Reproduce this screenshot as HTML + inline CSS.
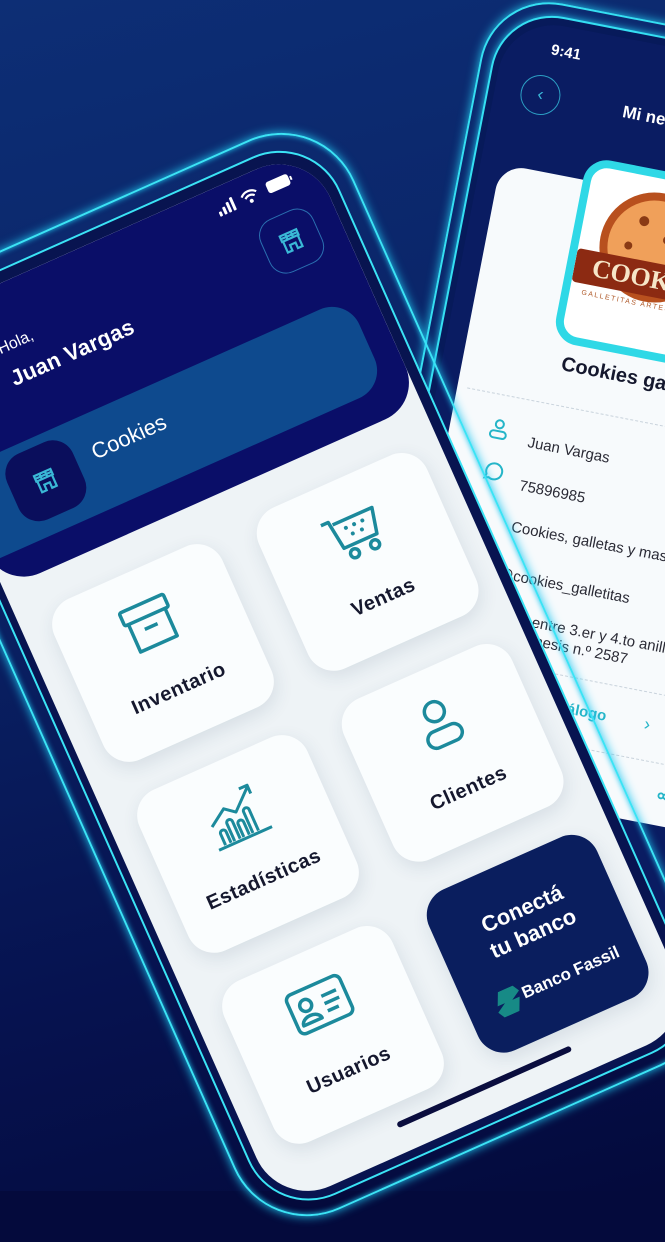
<!DOCTYPE html>
<html><head><meta charset="utf-8">
<style>
*{margin:0;padding:0;box-sizing:border-box}
html{background:#040a3c}
body{width:665px;height:1191px;overflow:hidden;position:relative;font-family:"Liberation Sans","DejaVu Sans",sans-serif;background:linear-gradient(165deg,#0d2e75 0%,#0a2366 40%,#06124f 75%,#040a3c 100%)}
.abs{position:absolute}
.rot{position:absolute;width:0;height:0}
.tile{position:absolute;width:184px;height:176px;border-radius:28px;background:#fafdfe;box-shadow:0 6px 18px rgba(40,70,110,.12)}
.tile .ic{position:absolute;left:50%;top:28px;transform:translateX(-50%)}
.tile .lb{position:absolute;left:0;right:0;top:116px;text-align:center;font-weight:bold;font-size:20px;color:#15182e;letter-spacing:.5px}
.rt{position:absolute;white-space:nowrap;color:#2a2a35;font-size:15px}
</style></head><body>

<!-- RIGHT PHONE -->
<div class="rot" style="left:528px;top:442px;transform:rotate(11deg)">
  <div class="abs" style="left:-120px;top:-437px;width:420px;height:1000px;border:2px solid #35dff2;border-radius:70px;box-shadow:0 0 10px #23c8ee"></div>
  <div class="abs" style="left:-108px;top:-424px;width:400px;height:980px;border:2px solid #35dff2;border-radius:62px;background:#071a5a;box-shadow:0 0 8px #23c8ee"></div>
  <div class="abs" style="left:-100px;top:-415px;width:380px;height:960px;border-radius:56px;background:#0a1c62"></div>
  <div class="abs" style="left:-52px;top:-398px;color:#fff;font-weight:bold;font-size:15px">9:41</div>
  <div class="abs" style="left:-74px;top:-363px;width:40px;height:40px;border:1.5px solid #2c9fc4;border-radius:50%;color:#3bb8d8;font-size:18px;text-align:center;line-height:36px">&#8249;</div>
  <div class="abs" style="left:30px;top:-352px;color:#fff;font-weight:bold;font-size:17px;white-space:nowrap">Mi negocio</div>
  <div class="abs" style="left:-80px;top:-268px;width:330px;height:620px;border-radius:26px;background:#f7fafc"></div>
  <div class="abs" style="left:4px;top:-292px;width:185px;height:188px;border:8px solid #2fd8e6;border-radius:24px;background:#fff;overflow:hidden">
    <div class="abs" style="left:20px;top:14px;width:110px;height:110px;border-radius:50%;background:#b8501e"></div>
    <div class="abs" style="left:28px;top:22px;width:94px;height:94px;border-radius:50%;background:#f0a05a"></div>
    <div class="abs" style="left:55px;top:40px;width:10px;height:10px;border-radius:50%;background:#8a3a14"></div>
    <div class="abs" style="left:82px;top:55px;width:9px;height:9px;border-radius:50%;background:#8a3a14"></div>
    <div class="abs" style="left:45px;top:68px;width:8px;height:8px;border-radius:50%;background:#8a3a14"></div>
    <div class="abs" style="left:0px;top:84px;width:180px;height:34px;background:#8c2a12;border-radius:4px;color:#f6e6c8;font-family:'Liberation Serif',serif;font-weight:bold;font-size:26px;line-height:34px;padding-left:18px">COOKIES</div>
    <div class="abs" style="left:12px;top:124px;color:#b05a2a;font-size:7px;letter-spacing:1.5px;white-space:nowrap">GALLETITAS ARTESANALES</div>
  </div>
  <div class="abs" style="left:18px;top:-94px;font-weight:bold;font-size:20px;color:#15182e;white-space:nowrap">Cookies galletitas</div>
  <div class="abs" style="left:-70px;top:-42px;width:310px;border-top:1.5px dashed #c9d3dc"></div>
  <svg class="abs" style="left:-42px;top:-18px" width="22" height="22" viewBox="0 0 22 22" fill="none" stroke="#25b5c8" stroke-width="2"><circle cx="11" cy="6" r="4"/><rect x="3" y="13" width="16" height="7" rx="3.5"/></svg>
  <div class="rt" style="left:0;top:-8px">Juan Vargas</div>
  <svg class="abs" style="left:-40px;top:24px" width="22" height="22" viewBox="0 0 22 22" fill="none" stroke="#25b5c8" stroke-width="2"><path d="M4 19l1.3-4A8 8 0 1 1 8 18z"/></svg>
  <div class="rt" style="left:0;top:36px">75896985</div>
  <div class="rt" style="left:0;top:78px">Cookies, galletas y masitas</div>
  <div class="rt" style="left:-4px;top:126px">@cookies_galletitas</div>
  <div class="rt" style="left:0;top:168px">Zona entre 3.er y 4.to anillo</div>
  <div class="rt" style="left:0;top:186px">Av. Génesis n.º 2587</div>
  <div class="abs" style="left:-70px;top:222px;width:310px;border-top:1.5px dashed #c9d3dc"></div>
  <div class="rt" style="left:40px;top:246px;color:#25b5c8;font-weight:bold">Ver catálogo</div>
  <div class="rt" style="left:168px;top:244px;color:#25b5c8;font-size:18px">&#8250;</div>
  <div class="abs" style="left:-70px;top:290px;width:310px;border-top:1.5px dashed #c9d3dc"></div>
  <svg class="abs" style="left:194px;top:312px" width="20" height="20" viewBox="0 0 20 20" fill="none" stroke="#25b5c8" stroke-width="1.8"><circle cx="15" cy="4" r="2.5"/><circle cx="4" cy="10" r="2.5"/><circle cx="15" cy="16" r="2.5"/><path d="M6.2 8.8l6.6-3.6M6.2 11.2l6.6 3.6"/></svg>
</div>

<!-- LEFT PHONE -->
<div class="rot" style="left:163px;top:653px;transform:rotate(-24deg)">
  <div class="abs" style="left:-145px;top:-434px;width:512px;height:1014px;border:2.5px solid #3be3f5;border-radius:80px;box-shadow:0 0 10px #1fc6f0,inset 0 0 6px #1fc6f0"></div>
  <div class="abs" style="left:-129px;top:-417px;width:479px;height:982px;border:2px solid #3be3f5;border-radius:66px;background:#081450"></div>
  <div class="abs" style="left:-120px;top:-404px;width:458px;height:959px;border-radius:56px;background:#eef3f6;overflow:hidden">
    <div class="abs" style="left:0;top:0;width:458px;height:281px;background:#0a0e68;border-radius:0 0 40px 40px"></div>
    <svg class="abs" style="left:350px;top:12px" width="90" height="20" viewBox="0 0 90 20">
      <rect x="0" y="12" width="3" height="5" rx="1" fill="#fff"/><rect x="5" y="9" width="3" height="8" rx="1" fill="#fff"/><rect x="10" y="6" width="3" height="11" rx="1" fill="#fff"/><rect x="15" y="3" width="3" height="14" rx="1" fill="#fff"/>
      <path d="M27 8a11 11 0 0 1 16 0M30 11a7 7 0 0 1 10 0" stroke="#fff" stroke-width="2.2" fill="none"/><circle cx="35" cy="15" r="2" fill="#fff"/>
      <rect x="54" y="4" width="24" height="12" rx="3" fill="#fff"/><rect x="79" y="8" width="2" height="4" fill="#fff"/>
    </svg>
    <div class="abs" style="left:376px;top:51px;width:58px;height:58px;border:1.5px solid #2a6fb0;border-radius:18px"></div>
    <svg class="abs" style="left:391px;top:66px" width="28" height="28" viewBox="0 0 28 28" fill="none" stroke="#3ab8d6" stroke-width="2.2"><path d="M5 11V5h18v6z M5 8h18 M11 5v6 M17 5v6 M6 11v12h5v-6h6v6h5V11"/></svg>
    <div class="abs" style="left:93px;top:52px;color:#fff;font-size:16px">Hola,</div>
    <div class="abs" style="left:93px;top:80px;color:#fff;font-size:22px;font-weight:bold;letter-spacing:.3px">Juan Vargas</div>
    <div class="abs" style="left:-20px;top:154px;width:453px;height:97px;background:#0e4a8e;border-radius:30px"></div>
    <div class="abs" style="left:47px;top:163px;width:72px;height:72px;background:#0a0e5c;border-radius:22px"></div>
    <svg class="abs" style="left:69px;top:185px" width="28" height="28" viewBox="0 0 28 28" fill="none" stroke="#3ab8d6" stroke-width="2.2"><path d="M5 11V5h18v6z M5 8h18 M11 5v6 M17 5v6 M6 11v12h5v-6h6v6h5V11"/></svg>
    <div class="abs" style="left:137px;top:180px;color:#fff;font-size:22px">Cookies</div>
    <div class="tile" style="left:28px;top:316px">
      <svg class="ic" width="60" height="56" viewBox="0 0 60 56" fill="none" stroke="#1c8a9c" stroke-width="3.5" stroke-linejoin="round"><rect x="6" y="6" width="48" height="14" rx="2"/><path d="M10 20v30h40V20"/><path d="M23 31h14"/></svg>
      <div class="lb">Inventario</div></div>
    <div class="tile" style="left:252px;top:316px">
      <svg class="ic" width="64" height="56" viewBox="0 0 64 56" fill="none" stroke="#1c8a9c" stroke-width="3.5" stroke-linejoin="round"><path d="M4 8h8l4 30h36l6-26H15"/><circle cx="24" cy="47" r="4.5"/><circle cx="46" cy="47" r="4.5"/><g fill="#1c8a9c" stroke="none"><circle cx="26" cy="20" r="2"/><circle cx="35" cy="20" r="2"/><circle cx="44" cy="20" r="2"/><circle cx="30" cy="28" r="2"/><circle cx="40" cy="28" r="2"/></g></svg>
      <div class="lb">Ventas</div></div>
    <div class="tile" style="left:28px;top:525px">
      <svg class="ic" width="64" height="58" viewBox="0 0 64 58" fill="none" stroke="#1c8a9c" stroke-width="3" stroke-linejoin="round"><path d="M6 30l18-12 10 8 20-18M46 6h9v9"/><path d="M3 54h58"/><path d="M11 52V40a3 3 0 0 1 6 0v12M21 52V33a3 3 0 0 1 6 0v19M31 52V38a3 3 0 0 1 6 0v14M41 52V29a3 3 0 0 1 6 0v23"/></svg>
      <div class="lb">Estadísticas</div></div>
    <div class="tile" style="left:252px;top:525px">
      <svg class="ic" width="56" height="56" viewBox="0 0 56 56" fill="none" stroke="#1c8a9c" stroke-width="3.5"><circle cx="28" cy="15" r="10"/><rect x="10" y="33" width="36" height="17" rx="8.5"/></svg>
      <div class="lb">Clientes</div></div>
    <div class="tile" style="left:28px;top:734px">
      <svg class="ic" width="66" height="54" viewBox="0 0 66 54" fill="none" stroke="#1c8a9c" stroke-width="3.5" stroke-linejoin="round"><rect x="4" y="6" width="58" height="42" rx="6"/><circle cx="20" cy="22" r="6"/><path d="M10 40a10 7 0 0 1 20 0z"/><path d="M38 20h16M38 28h16M38 36h12"/></svg>
      <div class="lb">Usuarios</div></div>
    <div class="tile" style="left:252px;top:734px;background:#0a1e5e">
      <div class="abs" style="left:0;right:0;top:36px;text-align:center;color:#fff;font-weight:bold;font-size:22px;line-height:27px">Conectá<br>tu banco</div>
      <svg class="abs" style="left:28px;top:116px" width="28" height="26" viewBox="0 0 28 26"><path d="M8 0h16l4 7-10 6h8l-6 13H4L0 19l10-6H2z" fill="#178a86"/></svg>
      <div class="abs" style="left:58px;top:118px;color:#fff;font-weight:bold;font-size:17px;white-space:nowrap">Banco Fassil</div>
    </div>
    <div class="abs" style="left:142px;top:928px;width:190px;height:6px;border-radius:3px;background:#0a0d3e"></div>
  </div>
</div>
</body></html>
